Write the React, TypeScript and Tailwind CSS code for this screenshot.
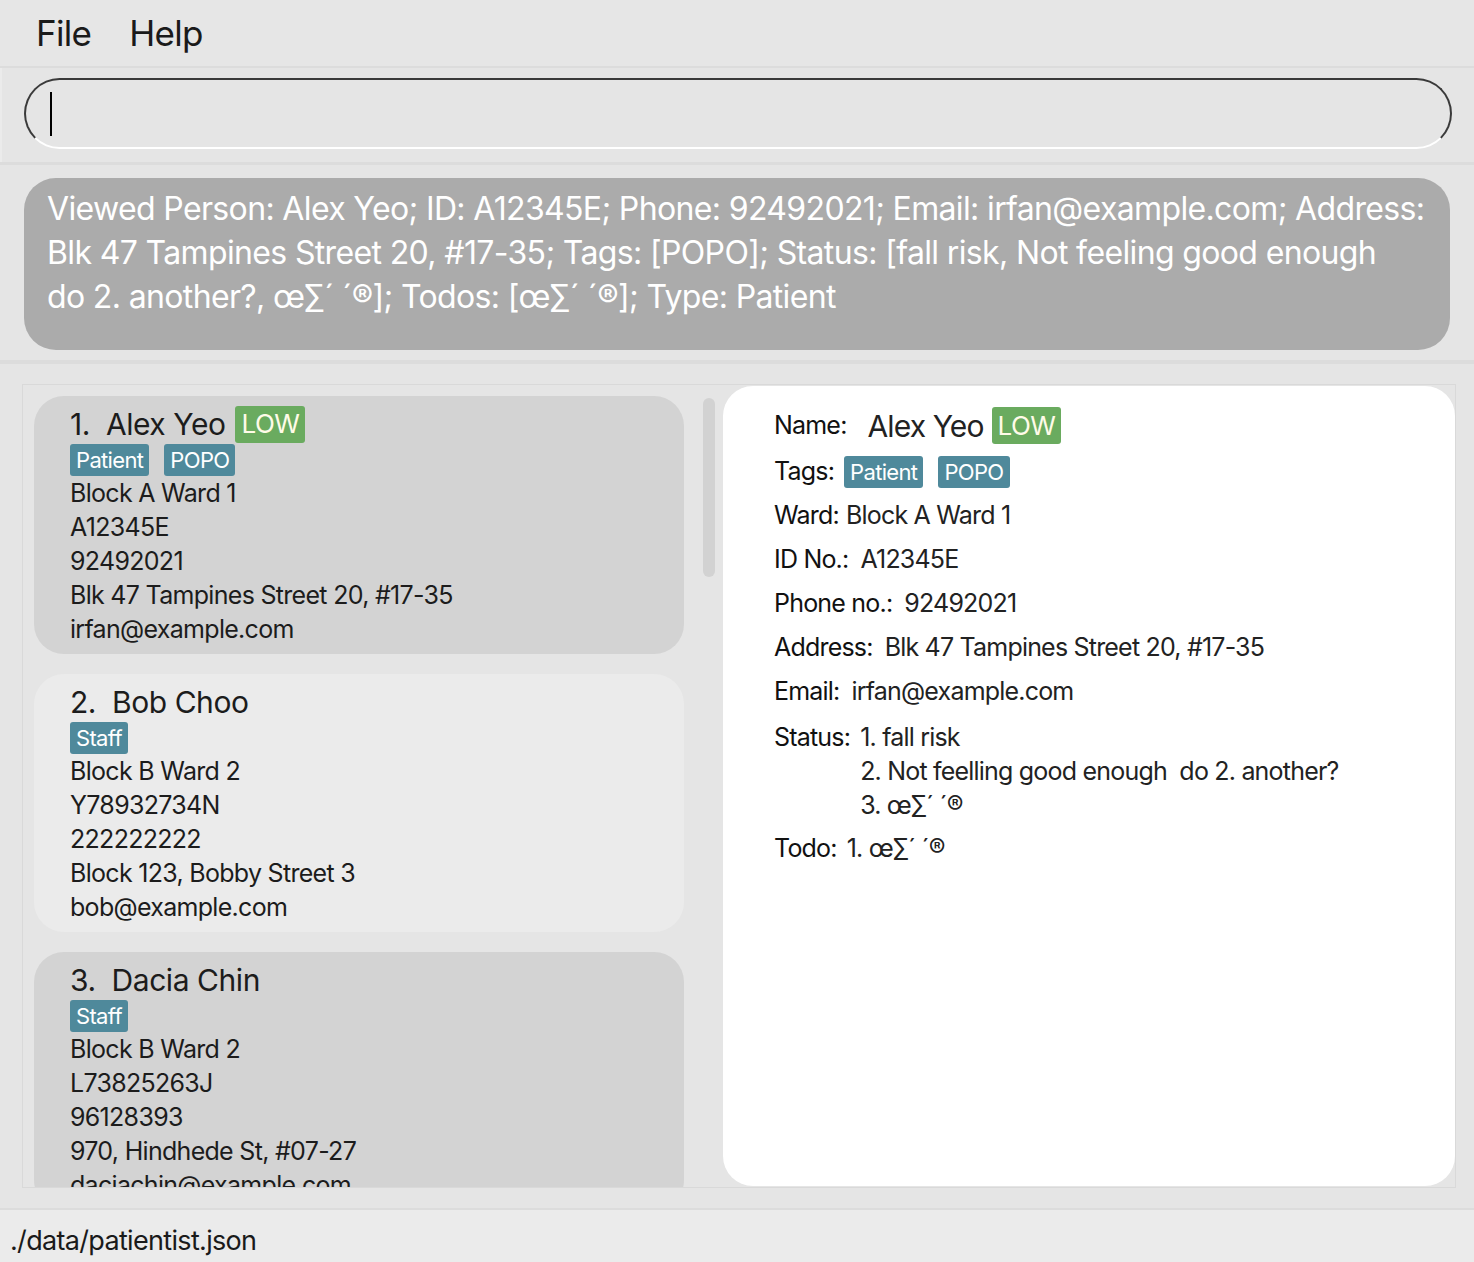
import React from "react";

type Person = {
  idx: number;
  name: string;
  low?: boolean;
  tags: string[];
  ward: string;
  id: string;
  phone: string;
  address: string;
  email: string;
};

const people: Person[] = [
  { idx: 1, name: "Alex Yeo", low: true, tags: ["Patient", "POPO"], ward: "Block A Ward 1", id: "A12345E", phone: "92492021", address: "Blk 47 Tampines Street 20, #17-35", email: "irfan@example.com" },
  { idx: 2, name: "Bob Choo", tags: ["Staff"], ward: "Block B Ward 2", id: "Y78932734N", phone: "222222222", address: "Block 123, Bobby Street 3", email: "bob@example.com" },
  { idx: 3, name: "Dacia Chin", tags: ["Staff"], ward: "Block B Ward 2", id: "L73825263J", phone: "96128393", address: "970, Hindhede St, #07-27", email: "daciachin@example.com" },
];

function Tag({ children }: { children: React.ReactNode }) {
  return (
    <span className="inline-flex items-center h-[32px] px-[6px] rounded-[3px] bg-[#4f899b] text-white text-[22px] leading-none tracking-[-0.03em]">
      {children}
    </span>
  );
}

function Low() {
  return (
    <span className="inline-flex items-center rounded-[3px] bg-[#6aab5f] text-[#fffbe8] leading-none px-[6px] h-[37px] text-[26px] tracking-[-0.02em]">
      LOW
    </span>
  );
}

function Card({ p }: { p: Person }) {
  const dark = p.idx % 2 === 1;
  return (
    <div className={"shrink-0 w-[650px] h-[258px] rounded-[30px] pl-[36px] pt-[8px] " + (dark ? "bg-[#d3d3d3]" : "bg-[#ebebeb]")}>
      <div className="h-[40px] flex items-center gap-[10px]">
        <span className="text-[30px] text-[#1c1c1c] tracking-[-0.015em] whitespace-pre">{p.idx + ".  " + p.name}</span>
        {p.low && <Low />}
      </div>
      <div className="h-[32px] flex items-center gap-[15px]">
        {p.tags.map((t) => (
          <Tag key={t}>{t}</Tag>
        ))}
      </div>
      <div className="text-[25px] leading-[34px] text-[#1c1c1c] tracking-[-0.028em]">
        <div>{p.ward}</div>
        <div>{p.id}</div>
        <div>{p.phone}</div>
        <div>{p.address}</div>
        <div>{p.email}</div>
      </div>
    </div>
  );
}

export default function App() {
  return (
    <div className="w-[1474px] h-[1262px] overflow-hidden flex flex-col bg-[#e6e6e6] text-[#111] font-['Inter','Noto_Sans',sans-serif]">
      {/* Menu bar */}
      <div className="h-[66px] shrink-0 flex items-center pl-[36px] gap-[38px] text-[35px] text-[#1a1a1a] tracking-[-0.02em]">
        <span>File</span>
        <span>Help</span>
      </div>
      <div className="h-[2px] shrink-0 bg-[#dcdcdc]" />

      {/* Command box */}
      <div className="h-[94px] shrink-0 pl-[22px] pr-[22px] pt-[10px] bg-[#e5e5e5] border-l-2 border-[#ebebeb]">
        <div className="relative h-[71px] rounded-full border-2 border-[#3a3a3a] border-b-white">
          <div className="absolute left-[24px] top-[12px] w-[2px] h-[44px] bg-black" />
        </div>
      </div>
      <div className="h-[3px] shrink-0 bg-[#dcdcdc]" />

      {/* Result display */}
      <div className="h-[195px] shrink-0 px-[24px] pt-[13px] bg-[#e5e5e5]">
        <div className="h-[172px] rounded-[32px] bg-[#ababab] pl-[23px] pt-[9px] text-white text-[32px] leading-[44px] tracking-[-0.02em] whitespace-nowrap">
          <div>Viewed Person: Alex Yeo; ID: A12345E; Phone: 92492021; Email: irfan@example.com; Address:</div>
          <div>Blk 47 Tampines Street 20, #17-35; Tags: [POPO]; Status: [fall risk, Not feeling good enough</div>
          <div>do 2. another?, œ∑´ ´®]; Todos: [œ∑´ ´®]; Type: Patient</div>
        </div>
      </div>
      <div className="h-[4px] shrink-0 bg-[#dcdcdc]" />

      {/* Main */}
      <div className="h-[844px] shrink-0 pl-[22px] pr-[18px] pt-[20px] bg-[#e5e5e5]">
        <div className="h-[804px] border border-[#d9d9d9] flex">
          {/* List */}
          <div className="w-[700px] shrink-0 h-full overflow-hidden flex">
            <div className="pl-[11px] pt-[11px] flex flex-col gap-[20px]">
              {people.map((p) => (
                <Card key={p.idx} p={p} />
              ))}
            </div>
            <div className="ml-[19px] mt-[13px] w-[12px] h-[179px] rounded-full bg-[#d2d2d2]" />
          </div>
          {/* Detail */}
          <div className="flex-1 mt-[1px] mb-[1px] rounded-[30px] bg-white pl-[51px] pt-[21px] text-[25px] tracking-[-0.032em]">
            <div className="h-[38px] flex items-center">
              <span className="text-[#111]">Name:</span>
              <span className="ml-[21px] text-[30px] text-[#222] tracking-[-0.03em]">Alex Yeo</span>
              <span className="ml-[8px]"><Low /></span>
            </div>
            <div className="mt-[11px] h-[32px] flex items-center gap-[15px]">
              <span className="mr-[-5px]">Tags:</span>
              <Tag>Patient</Tag>
              <Tag>POPO</Tag>
            </div>
            <div className="mt-[6px] flex flex-col">
              <div className="h-[44px] flex items-center"><span>Ward:</span><span className="ml-[7px] text-[#222]">Block A Ward 1</span></div>
              <div className="h-[44px] flex items-center"><span>ID No.:</span><span className="ml-[12px] text-[#222]">A12345E</span></div>
              <div className="h-[44px] flex items-center"><span>Phone no.:</span><span className="ml-[12px] text-[#222]">92492021</span></div>
              <div className="h-[44px] flex items-center"><span>Address:</span><span className="ml-[12px] text-[#222]">Blk 47 Tampines Street 20, #17-35</span></div>
              <div className="h-[44px] flex items-center"><span>Email:</span><span className="ml-[12px] text-[#222]">irfan@example.com</span></div>
              <div className="mt-[6px] flex leading-[34px]">
                <span>Status:</span>
                <div className="ml-[10px] flex flex-col text-[#222]">
                  <span>1. fall risk</span>
                  <span className="whitespace-pre">2. Not feelling good enough  do 2. another?</span>
                  <span>3. œ∑´ ´®</span>
                </div>
              </div>
              <div className="mt-[9px] flex leading-[34px]">
                <span>Todo:</span>
                <span className="ml-[10px] text-[#222]">1. œ∑´ ´®</span>
              </div>
            </div>
          </div>
        </div>
      </div>

      {/* Status bar */}
      <div className="flex-1 border-t-2 border-[#dcdcdc] bg-[#ebebeb] pl-[10px] pt-[10px] flex items-center text-[27px] text-[#1a1a1a] tracking-[-0.025em]">
        ./data/patientist.json
      </div>
    </div>
  );
}
